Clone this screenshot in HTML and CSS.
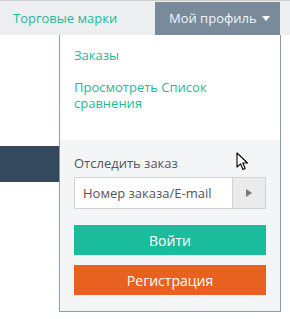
FILE: index.html
```html
<!DOCTYPE html>
<html lang="ru">
<head>
  <meta charset="UTF-8" />
  <title>Мой профиль</title>
  <link rel="stylesheet" href="styles.css">
</head>
<body>
  <div class="topbar">
    <a class="brand-link" href="#">Торговые марки</a>
    <div class="profile">Мой профиль <span class="caret"></span></div>
  </div>

  <div class="page">
    <div class="dark-strip"></div>
  </div>

  <div class="dropdown">
    <div class="dropdown-links">
      <a href="#">Заказы</a>
      <a href="#">Просмотреть Список сравнения</a>
    </div>
    <div class="dropdown-bottom">
      <div class="track-label">Отследить заказ</div>
      <div class="track-field">
        <input type="text" placeholder="Номер заказа/E-mail" />
        <button class="track-go"><span class="play"></span></button>
      </div>
      <button class="btn btn-login">Войти</button>
      <button class="btn btn-register">Регистрация</button>
    </div>
  </div>

  <svg class="cursor" width="13" height="20" viewBox="0 0 13 20">
    <path d="M1 1 L1 15 L4.5 11.8 L7 17.5 L9.2 16.5 L6.8 11 L11.5 11 Z" fill="#fff" stroke="#000" stroke-width="1.1" stroke-linejoin="round"/>
  </svg>
</body>
</html>
```

FILE: styles.css
```css
:root {
  --teal: #1abc9c;
  --orange: #e96121;
  --slate: #798a9a;
  --border: #8d9caa;
  --light: #f4f5f7;
  --text: #555;
}

* {
  box-sizing: border-box;
  margin: 0;
  padding: 0;
}

body {
  font-family: "Open Sans", "Noto Sans", sans-serif;
  font-size: 13px;
  background: #fff;
  color: var(--text);
  position: relative;
  width: 290px;
  height: 319px;
  overflow: hidden;
}

a {
  color: var(--teal);
  text-decoration: none;
}

.topbar {
  display: flex;
  justify-content: space-between;
  height: 35px;
  background: #edeef0;
  border-top: 1px solid #cfcfcf;
}

.brand-link {
  padding-left: 13px;
  line-height: 34px;
}

.profile {
  margin-top: 1px;
  margin-right: 10px;
  width: 125px;
  height: 33px;
  padding-left: 4px;
  background: var(--slate);
  color: #f2f6f9;
  line-height: 33px;
  text-align: center;
  font-size: 13px;
}

.caret {
  display: inline-block;
  width: 0;
  height: 0;
  margin-left: 2px;
  vertical-align: 2px;
  border-left: 4px solid transparent;
  border-right: 4px solid transparent;
  border-top: 5px solid #fff;
}

.page {
  padding-top: 111px;
}

.dark-strip {
  width: 59px;
  height: 36px;
  background: #34495e;
}

.dropdown {
  position: absolute;
  top: 35px;
  left: 59px;
  width: 222px;
  border: 1px solid var(--border);
  border-top: none;
  background: #fff;
}

.dropdown-links {
  padding: 12px 14px 29px 14px;
}

.dropdown-links a {
  display: block;
  line-height: 16px;
}

.dropdown-links a + a {
  margin-top: 16px;
  padding-right: 40px;
}

.dropdown-bottom {
  background: var(--light);
  padding: 15px 14px 16px 14px;
}

.track-label {
  line-height: 16px;
  margin-bottom: 6px;
}

.track-field {
  display: flex;
  height: 32px;
  border: 1px solid #cfd3d7;
  background: #fff;
  margin-bottom: 16px;
}

.track-field input {
  flex: 1;
  min-width: 0;
  border: none;
  outline: none;
  padding-left: 8px;
  font-family: inherit;
  font-size: 13px;
  color: var(--text);
  background: transparent;
}

.track-field input::placeholder {
  color: #555;
}

.track-go {
  width: 33px;
  border: none;
  border-left: 1px solid #cfd3d7;
  background: #ebebeb;
  display: flex;
  align-items: center;
  justify-content: center;
}

.play {
  width: 0;
  height: 0;
  border-top: 4px solid transparent;
  border-bottom: 4px solid transparent;
  border-left: 6px solid #7a7a7a;
}

.btn {
  display: block;
  width: 100%;
  height: 30px;
  border: none;
  color: #fff;
  font-family: inherit;
  font-size: 14px;
}

.btn-login {
  background: var(--teal);
  margin-bottom: 10px;
}

.btn-register {
  background: var(--orange);
}

.cursor {
  position: absolute;
  left: 236px;
  top: 152px;
}
```
